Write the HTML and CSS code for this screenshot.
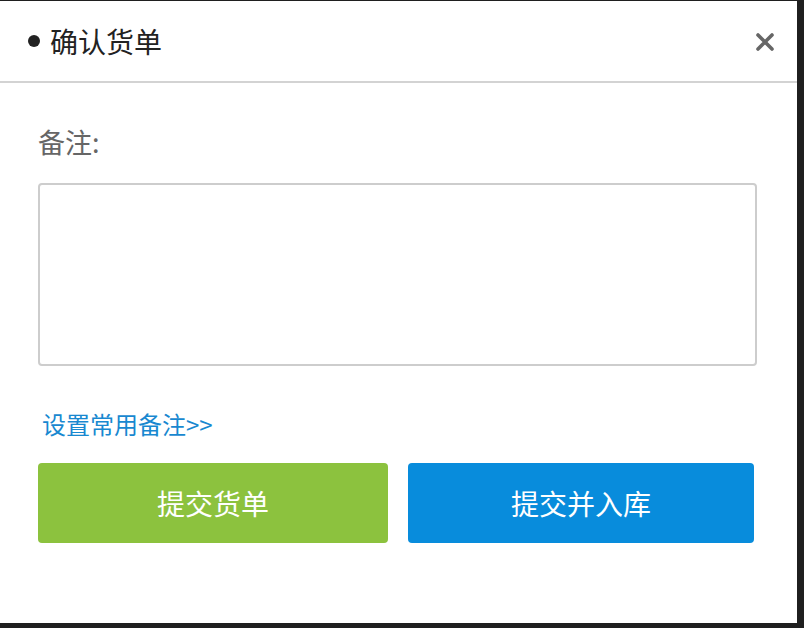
FILE: index.html
```html
<!DOCTYPE html>
<html lang="zh-CN">
<head>
<meta charset="utf-8">
<title>确认货单</title>
<link rel="stylesheet" href="styles.css">
</head>
<body>
<div class="dialog">
  <div class="header">
    <span class="dot"></span>
    <span class="title">确认货单</span>
    <span class="close" aria-label="关闭">
      <svg width="20" height="20" viewBox="0 0 20 20"><path d="M3 3 L17 17 M17 3 L3 17" stroke="#666" stroke-width="3.6" stroke-linecap="round" fill="none"/></svg>
    </span>
  </div>
  <div class="body">
    <div class="label">备注:</div>
    <textarea class="remark"></textarea>
    <a class="link" href="#">设置常用备注&gt;&gt;</a>
    <div class="actions">
      <button class="btn btn-green">提交货单</button>
      <button class="btn btn-blue">提交并入库</button>
    </div>
  </div>
</div>
</body>
</html>
```

FILE: styles.css
```css
html, body {
  margin: 0;
  padding: 0;
  background: #1f1f1f;
  height: 628px;
  overflow: hidden;
}
body {
  font-family: "Noto Sans CJK SC", "Noto Sans", sans-serif;
}
.dialog {
  margin-top: 1px;
  width: 797px;
  height: 622px;
  background: #fff;
  box-sizing: border-box;
}
.header {
  height: 80px;
  display: flex;
  align-items: center;
  padding: 0 22px 0 28px;
  border-bottom: 2px solid #d3d3d3;
}
.dot {
  width: 12px;
  height: 12px;
  border-radius: 50%;
  background: #222;
  margin-right: 10px;
}
.title {
  font-size: 28px;
  line-height: 40px;
  color: #222;
  flex: 1;
}
.close {
  display: flex;
  width: 20px;
  height: 20px;
  margin-top: 1px;
}
.body {
  padding: 39px 40px 0 38px;
  display: flex;
  flex-direction: column;
  align-items: flex-start;
}
.label {
  font-size: 27px;
  line-height: 40px;
  color: #666;
}
.remark {
  margin-top: 21px;
  width: 719px;
  height: 183px;
  box-sizing: border-box;
  border: 2px solid #cdcdcd;
  border-radius: 4px;
  resize: none;
  outline: none;
}
.link {
  margin-top: 42px;
  margin-left: 4px;
  font-size: 24px;
  line-height: 32px;
  color: #1888d0;
  text-decoration: none;
}
.actions {
  margin-top: 23px;
  display: grid;
  grid-template-columns: 350px 346px;
  column-gap: 20px;
}
.btn {
  height: 80px;
  border: none;
  border-radius: 4px;
  color: #fff;
  font-family: "Noto Sans CJK SC", "Noto Sans", sans-serif;
  font-size: 28px;
  padding: 0;
}
.btn-green { background: #8cc23e; }
.btn-blue { background: #088cdc; }
```
